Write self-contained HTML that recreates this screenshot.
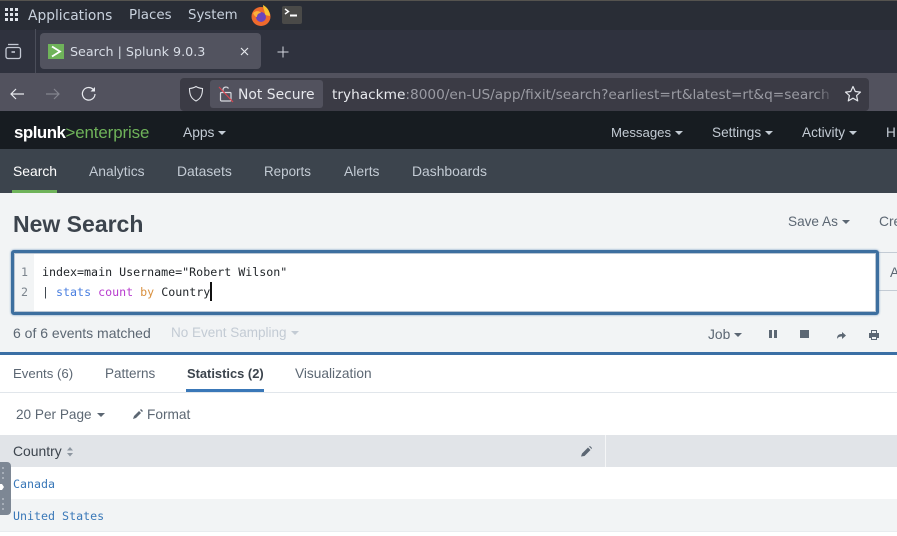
<!DOCTYPE html>
<html><head><meta charset="utf-8">
<style>
html,body{margin:0;padding:0;width:897px;height:536px;overflow:hidden;background:#fff}
body{position:relative;font-family:"Liberation Sans",sans-serif}
.a{position:absolute;white-space:nowrap}
.u{font-family:"DejaVu Sans",sans-serif}
.m{font-family:"DejaVu Sans Mono",monospace;font-size:11.65px}
svg{position:absolute;overflow:visible}
.n{font-size:13.6px;color:#c3cbd4;top:125px;line-height:16px}
.t{font-size:13.9px;color:#c3cbd4;top:163px;line-height:16px}
.g{font-size:13.8px;color:#5c6773;line-height:16px}
.car{display:inline-block;width:0;height:0;border:4px solid transparent;border-top:4px solid currentColor;border-bottom:0;vertical-align:2px;margin-left:4px}
</style></head><body>
<!-- OS top panel -->
<div class="a" style="left:0;top:0;width:897px;height:30px;background:#292d36"></div>
<div class="a" style="left:0;top:0;width:897px;height:1px;background:#55534f"></div>
<svg style="left:5px;top:8px" width="14" height="14" fill="#dfe3ea"><rect x="0" y="0" width="3" height="3"/><rect x="5" y="0" width="3" height="3"/><rect x="10" y="0" width="3" height="3"/><rect x="0" y="5" width="3" height="3"/><rect x="5" y="5" width="3" height="3"/><rect x="10" y="5" width="3" height="3"/><rect x="0" y="10" width="3" height="3"/><rect x="5" y="10" width="3" height="3"/><rect x="10" y="10" width="3" height="3"/></svg>
<div class="a u" style="left:28px;top:7px;font-size:13.8px;line-height:18px;color:#c9d2de">Applications</div>
<div class="a u" style="left:129px;top:7px;font-size:13.4px;line-height:18px;color:#c9d2de">Places</div>
<div class="a u" style="left:188px;top:7px;font-size:13.3px;line-height:18px;color:#c9d2de">System</div>
<svg style="left:250px;top:4px" width="22" height="22"><circle cx="11" cy="12.5" r="9.5" fill="#ee6a2c"/><path d="M13 1c4 2 7 6 7 11l-5-1c0-4-2-6-2-10z" fill="#f9c22e"/><circle cx="11" cy="13" r="5" fill="#6a45bd"/><path d="M3 9c3-3 7-2 8 0-3 0-4 2-4 4-2 0-3-2-4-4z" fill="#fbb03b"/></svg>
<div class="a" style="left:282px;top:6px;width:20px;height:18px;background:#4a4a48;border-radius:2px"></div>
<svg style="left:282px;top:6px" width="20" height="18" fill="none" stroke="#fff" stroke-width="1.4"><path d="M3 3l3.5 2.5L3 8"/><path d="M8 9.5h7" stroke-width="2"/></svg>

<!-- Tab bar -->
<div class="a" style="left:0;top:30px;width:897px;height:43px;background:#2f323e"></div>
<div class="a" style="left:35px;top:29px;width:1px;height:44px;background:#4b4e5a"></div>
<svg style="left:5px;top:43px" width="17" height="17" fill="none" stroke="#c4c9d4" stroke-width="1.3"><rect x="1" y="4.5" width="14.5" height="11" rx="2"/><path d="M3 1.5h10.500"/><path d="M6.500 9h3.500" stroke-width="1.600"/></svg>
<div class="a" style="left:40px;top:33px;width:221px;height:36px;background:#52535f;border-radius:4px"></div>
<div class="a" style="left:48px;top:44px;width:16px;height:15px;background:#6fb35a"></div>
<svg style="left:48px;top:44px" width="16" height="15" fill="none" stroke="#fff" stroke-width="1.800"><path d="M4 2.500l8 5-8 5"/></svg>
<div class="a u" style="left:70px;top:43px;font-size:12.7px;line-height:18px;color:#d8dde6">Search | Splunk 9.0.3</div>
<svg style="left:240px;top:47px" width="9" height="9" stroke="#e5e7ec" stroke-width="1.200"><path d="M1 1l7 7M8 1l-7 7"/></svg>
<svg style="left:277px;top:46px" width="12" height="12" stroke="#d5d8e0" stroke-width="1"><path d="M6 .5v11M.5 6h11"/></svg>

<!-- URL bar -->
<div class="a" style="left:0;top:73px;width:897px;height:38px;background:#52525e"></div>
<svg style="left:9px;top:86px" width="16" height="16" fill="none" stroke="#e8eaef" stroke-width="1.200"><path d="M15 8H2M7 3L2 8l5 5"/></svg>
<svg style="left:45px;top:86px" width="16" height="16" fill="none" stroke="#84858f" stroke-width="1.200"><path d="M1 8h13M9 3l5 5-5 5"/></svg>
<svg style="left:81px;top:86px" width="16" height="16" fill="none" stroke="#e8eaef" stroke-width="1.200"><path d="M14 8a6.300 6.300 0 1 1-2-4.800"/><path d="M14 1v4.500H9.500" fill="#e8eaef" stroke="none"/></svg>
<div class="a" style="left:180px;top:78px;width:689px;height:33px;background:#3b3b45;border-radius:4px"></div>
<svg style="left:188px;top:85px" width="16" height="18" fill="none" stroke="#e0e2e7" stroke-width="1.100"><path d="M8 1.500c2 1.300 4 1.800 6.500 2 0 6-1.500 10-6.500 12.500C3 13.500 1.500 9.500 1.500 3.500c2.500-.2 4.500-.7 6.500-2z"/></svg>
<div class="a" style="left:210px;top:80px;width:113px;height:28px;background:#52525e;border-radius:3px"></div>
<svg style="left:219px;top:85px" width="14" height="18" fill="none" stroke="#d8dae0" stroke-width="1.200"><rect x="1.500" y="7.500" width="10.500" height="8.500" rx="1"/><path d="M4 7.500V4.500a3 3 0 0 1 5.500-1"/><path d="M0 2l14 15" stroke="#d9434f"/></svg>
<div class="a u" style="left:238px;top:86px;font-size:13.9px;line-height:18px;color:#e6e8ed">Not Secure</div>
<div class="a u" style="left:332px;top:86px;width:508px;overflow:hidden;font-size:13.7px;line-height:18px;color:#9a9ba3"><span style="color:#e8eaee">tryhackme</span>:8000/en-US/app/fixit/search?earliest=rt&amp;latest=rt&amp;q=search index</div>
<div class="a" style="left:816px;top:84px;width:24px;height:22px;background:linear-gradient(90deg,rgba(59,59,69,0),#3b3b45 80%)"></div>
<svg style="left:844px;top:85px" width="18" height="18" fill="none" stroke="#e4e6eb" stroke-width="1.200" stroke-linejoin="round"><path d="M9 1.500l2.300 5 5.200.6-3.900 3.500 1.100 5.300L9 13.200l-4.700 2.700 1.100-5.300L1.500 7.100l5.200-.6z"/></svg>

<!-- Splunk nav -->
<div class="a" style="left:0;top:111px;width:897px;height:38px;background:#171c21"></div>
<div class="a" style="left:14px;top:123px;font-size:16.9px;line-height:20px;color:#fff;letter-spacing:-.5px;font-weight:bold">splunk<span style="color:#6fb35a;font-weight:normal;letter-spacing:-.1px">&gt;enterprise</span></div>
<div class="a n" style="left:183px;font-size:13.8px">Apps<i class="car"></i></div>
<div class="a n" style="left:611px;font-size:13.2px">Messages<i class="car"></i></div>
<div class="a n" style="left:712px">Settings<i class="car"></i></div>
<div class="a n" style="left:802px">Activity<i class="car"></i></div>
<div class="a n" style="left:886px">H</div>

<!-- App bar -->
<div class="a" style="left:0;top:149px;width:897px;height:44px;background:#3c444d"></div>
<div class="a t" style="left:13px;color:#fff">Search</div>
<div class="a" style="left:12px;top:190px;width:45px;height:3px;background:#6fb35a"></div>
<div class="a t" style="left:89px">Analytics</div>
<div class="a t" style="left:177px">Datasets</div>
<div class="a t" style="left:264px;top:164px;font-size:13.4px">Reports</div>
<div class="a t" style="left:344px">Alerts</div>
<div class="a t" style="left:412px">Dashboards</div>

<!-- Page -->
<div class="a" style="left:0;top:193px;width:897px;height:159px;background:#f2f4f5"></div>
<div class="a" style="left:13px;top:210px;font-size:23px;font-weight:bold;line-height:28px;color:#3c444d">New Search</div>
<div class="a g" style="left:788px;top:214px;font-size:13.6px">Save As<i class="car"></i></div>
<div class="a g" style="left:879px;top:214px">Cre</div>
<div class="a" style="left:877px;top:252px;width:20px;height:39px;background:#f2f4f5;border-top:1px solid #c3cbd4;border-bottom:1px solid #c3cbd4;box-sizing:border-box"></div>
<div class="a g" style="left:890px;top:265px">A</div>

<div class="a" style="left:11px;top:250px;width:868px;height:65px;box-sizing:border-box;background:#fff;border:3px solid #3d6f9f;border-radius:3px;box-shadow:inset 0 0 0 1px #b9c6d4,0 0 2px #6b93bb"></div>
<div class="a" style="left:15px;top:254px;width:19px;height:57px;background:#f2f4f5"></div>
<div class="a m" style="left:21px;top:264px;line-height:16px;color:#7b848d">1</div>
<div class="a m" style="left:21px;top:284px;line-height:16px;color:#7b848d">2</div>
<div class="a m" style="left:42px;top:264px;line-height:16px;color:#22262a">index=main Username="Robert Wilson"</div>
<div class="a m" style="left:42px;top:284px;line-height:16px;color:#22262a"><span style="color:#3c444d">|</span> <span style="color:#4a7fe0">stats</span> <span style="color:#b83ccf">count</span> <span style="color:#d9903f">by</span> Country</div>
<div class="a" style="left:210px;top:282px;width:2px;height:19px;background:#111"></div>

<div class="a g" style="left:13px;top:325px;font-size:14px">6 of 6 events matched</div>
<div class="a" style="left:171px;top:325px;font-size:13.5px;line-height:16px;color:#c3cbd4">No Event Sampling<i class="car"></i></div>
<div class="a g" style="left:708px;top:327px">Job<i class="car"></i></div>
<svg style="left:768px;top:329px" width="110" height="12" fill="#5c6773"><rect x="1" y="1" width="3" height="8"/><rect x="6" y="1" width="3" height="8"/><rect x="32" y="1" width="9" height="8"/><path d="M69 10c0-4 2-5 5-5V3l4 3.500-4 3.500V7.500c-2 0-4 .5-5 2.500z"/><path d="M103 1h6v3h2v5h-2v2h-6V9h-2V4h2zm1 1v2h4V2zm0 6v2h4V8z"/></svg>

<div class="a" style="left:0;top:352px;width:897px;height:3px;background:#3a6fa5"></div>
<div class="a" style="left:0;top:355px;width:897px;height:181px;background:#fff"></div>
<div class="a g" style="left:13px;top:366px;font-size:13.2px">Events (6)</div>
<div class="a g" style="left:105px;top:366px;font-size:13.5px">Patterns</div>
<div class="a g" style="left:187px;top:366px;font-weight:bold;color:#3c444d;font-size:12.9px">Statistics (2)</div>
<div class="a g" style="left:295px;top:366px;font-size:13.7px">Visualization</div>
<div class="a" style="left:0;top:392px;width:897px;height:1px;background:#e1e6eb"></div>
<div class="a" style="left:186px;top:389px;width:78px;height:3px;background:#3a78b8"></div>

<div class="a g" style="left:16px;top:407px;font-size:13.6px">20 Per Page<i class="car" style="margin-left:5px"></i></div>
<svg style="left:132px;top:409px" width="11" height="11" fill="#5c6773"><path d="M1 10l1-3 5-5 2 2-5 5zM8 1l1-1 2 2-1 1z"/></svg>
<div class="a g" style="left:147px;top:407px;font-size:13.7px">Format</div>

<div class="a" style="left:0;top:435px;width:897px;height:32px;background:#e1e4e8"></div>
<div class="a" style="left:605px;top:435px;width:1px;height:32px;background:#f5f6f7"></div>
<div class="a g" style="left:13px;top:443px;color:#3c444d;font-size:13.9px">Country</div>
<svg style="left:66px;top:446px" width="8" height="11" fill="#8d96a0"><path d="M4 1l3 3.500h-6zM4 10.500L1 7h6z"/></svg>
<svg style="left:581px;top:446px" width="11" height="11" fill="#5c6773"><path d="M0 10.500l1-3 6-6 2.500 2.500-6 6zM8 .5l1-.5 2 2-.5 1z"/></svg>

<div class="a" style="left:0;top:499px;width:897px;height:32px;background:#f2f4f5"></div>
<div class="a" style="left:0;top:531px;width:897px;height:1px;background:#e9ecef"></div>
<div class="a m" style="left:13px;top:476px;line-height:16px;color:#3a78b8">Canada</div>
<div class="a m" style="left:13px;top:508px;line-height:16px;color:#3a78b8">United States</div>

<div class="a" style="left:0;top:462px;width:11px;height:53px;background:#7d8794;border-radius:0 4px 4px 0"></div>
<svg style="left:0;top:462px" width="11" height="53" fill="#a6aeb8"><rect x="2" y="5" width="2" height="2"/><rect x="2" y="10" width="2" height="2"/><rect x="2" y="15" width="2" height="2"/><rect x="2" y="36" width="2" height="2"/><rect x="2" y="41" width="2" height="2"/><rect x="2" y="46" width="2" height="2"/><path d="M0 22h2l2 3-2 3H0z" fill="#fff"/></svg>
</body></html>
